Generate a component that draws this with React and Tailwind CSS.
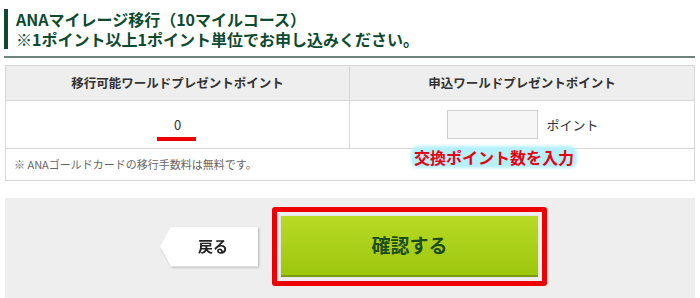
export default function App() {
  const jp = { fontFamily: '"Noto Sans CJK JP", "Noto Sans", sans-serif' };
  return (
    <div className="w-[700px] h-[298px] bg-white overflow-hidden" style={jp}>
      <div className="pt-[9px] pl-[4px]">
        <div className="border-l-[4px] border-[#0d4a30] pl-[8px] text-[16px] leading-[20px] font-bold text-[#0d4a30]">
          <div className="h-[20px]">ANAマイレージ移行（10マイルコース）</div>
          <div className="h-[20px]">※1ポイント以上1ポイント単位でお申し込みください。</div>
        </div>
      </div>
      <div className="mt-[7px] ml-[4px] w-[691px] border-b-2 border-[#6f827b]"></div>
      <div className="relative mt-[7px] ml-[5px] w-[690px] border border-[#d6d6d6]">
        <div className="grid grid-cols-[344px_1fr] bg-[#eeeeee] h-[35px] border-b border-[#d6d6d6] text-[12.5px] font-bold text-[#333]">
          <div className="flex items-center justify-center border-r border-[#d6d6d6]">移行可能ワールドプレゼントポイント</div>
          <div className="flex items-center justify-center">申込ワールドプレゼントポイント</div>
        </div>
        <div className="grid grid-cols-[344px_1fr] h-[48px] border-b border-[#d6d6d6] text-[13px] text-[#333]">
          <div className="relative flex items-center justify-center border-r border-[#d6d6d6]">
            <span>0</span>
            <div className="absolute left-[151px] top-[36px] w-[39px] h-[4px] bg-[#ee0000]"></div>
          </div>
          <div className="flex items-center justify-center gap-[8px] pl-[2px]">
            <div className="w-[91px] h-[29px] bg-[#f6f6f6] border border-[#cfcfcf]"></div>
            <span>ポイント</span>
          </div>
        </div>
        <div className="h-[31px] flex items-center pl-[8px] text-[11px] text-[#666]">
          ※ ANAゴールドカードの移行手数料は無料です。
        </div>
        <div className="absolute left-[405px] top-[80px] px-[3px] py-[1px]">
          <div className="absolute inset-0 rounded-[7px] bg-[#b4f1fb] blur-[1.5px]"></div>
          <div className="relative text-[16px] font-bold text-[#e60012] leading-[20px]">
            交換ポイント数を入力
          </div>
        </div>
      </div>
      <div className="mt-[17px] ml-[5px] w-[690px] h-[101px] bg-[#eeeeee] pt-[9px] pl-[155px]">
        <div className="flex items-center gap-[14px] h-[79px]">
          <div className="drop-shadow-[1px_1px_1px_rgba(0,0,0,0.25)]">
            <div className="w-[98px] h-[40px] bg-white flex items-center justify-center pl-[8px] text-[15px] font-bold text-[#222] [clip-path:polygon(11px_0,100%_0,100%_100%,11px_100%,0_50%)]">
              戻る
            </div>
          </div>
          <div className="w-[275px] h-[79px] border-[5px] border-[#ee0000] rounded-[3px] p-[4px] bg-[#eeeeee]">
            <div className="h-full bg-gradient-to-b from-[#b8da24] to-[#9cc70a] border-b-2 border-[#7a9a12] flex items-center justify-center text-[19px] font-bold text-[#1d4d1d] shadow-[0_0_1px_rgba(0,0,0,0.2)]">
              確認する
            </div>
          </div>
        </div>
      </div>
    </div>
  );
}
